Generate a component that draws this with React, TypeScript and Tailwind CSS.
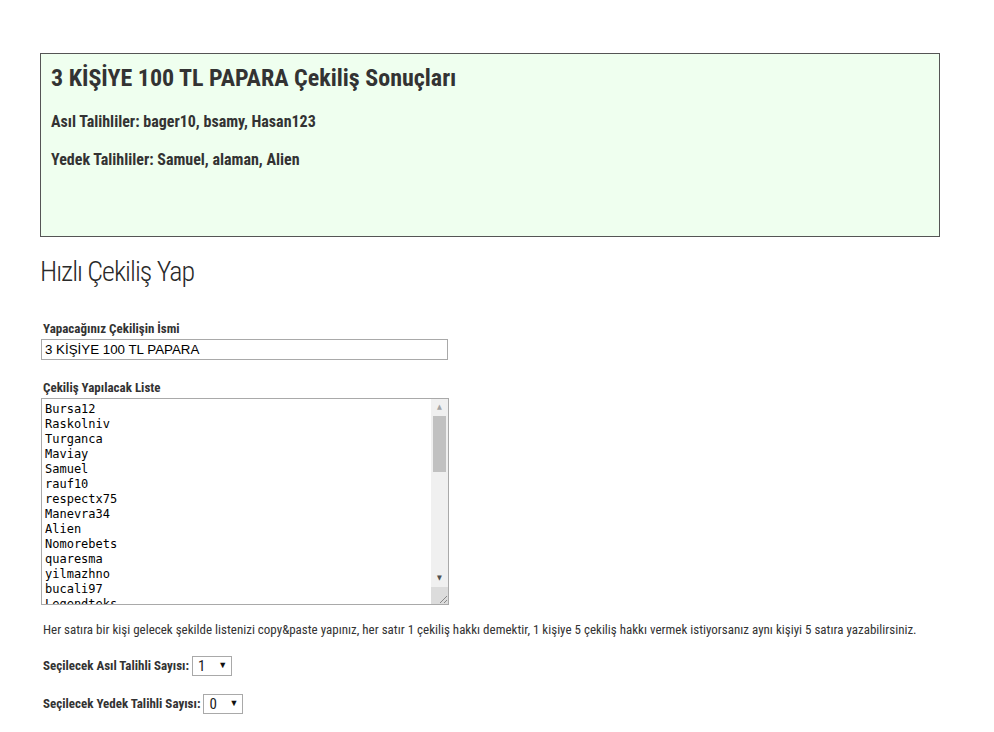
import React from "react";

const names = [
  "Bursa12",
  "Raskolniv",
  "Turganca",
  "Maviay",
  "Samuel",
  "rauf10",
  "respectx75",
  "Manevra34",
  "Alien",
  "Nomorebets",
  "quaresma",
  "yilmazhno",
  "bucali97",
  "Legendteks",
];

const cond = "font-['Roboto_Condensed','Liberation_Sans_Narrow','DejaVu_Sans_Condensed',sans-serif] [font-stretch:condensed]";

function FakeSelect({ value }: { value: string }) {
  return (
    <span className="inline-flex items-center h-[20px] w-[40px] border border-[#a9a9a9] bg-white pl-[5px] pr-[4px] justify-between align-middle">
      <span className={`text-[15px] font-normal text-[#222] ${cond}`}>{value}</span>
      <span className="text-[9px] text-[#111] font-['Liberation_Sans',sans-serif]">▼</span>
    </span>
  );
}

export default function App() {
  return (
    <div className={`min-h-[732px] bg-white text-[#333] ${cond}`}>
      <div className="pl-[40px] pt-[53px] w-[940px]">
        <div className="h-[184px] border border-[#555] bg-[#efffef] pl-[10px] pt-[10px]">
          <div className="text-[24px] font-bold leading-[28px]">3 KİŞİYE 100 TL PAPARA Çekiliş Sonuçları</div>
          <div className="mt-[20px] text-[16px] font-bold leading-[20px]">Asıl Talihliler: bager10, bsamy, Hasan123</div>
          <div className="mt-[18px] text-[16px] font-bold leading-[20px]">Yedek Talihliler: Samuel, alaman, Alien</div>
        </div>
        <div className="mt-[18px] text-[28px] font-light leading-[34px] tracking-[-1px] text-[#2a2a2a]">Hızlı Çekiliş Yap</div>
        <div className="pl-[1px] mt-[32px]">
          <div className="pl-[2px] text-[13px] font-bold leading-[15px]">Yapacağınız Çekilişin İsmi</div>
          <div className="mt-[3px] h-[21px] w-[407px] border border-[#a9a9a9] pl-[3px] text-[13.33px] leading-[19px] text-black font-['Liberation_Sans',sans-serif] [font-stretch:normal]">
            3 KİŞİYE 100 TL PAPARA
          </div>
          <div className="mt-[20px] pl-[2px] text-[13px] font-bold leading-[15px]">Çekiliş Yapılacak Liste</div>
          <div className="mt-[3px] h-[207px] w-[408px] border border-[#a9a9a9] flex">
            <div className="flex-1 overflow-hidden pl-[3px] pt-[3px] font-['DejaVu_Sans_Mono',monospace] [font-stretch:normal] text-[12px] leading-[15px] text-black">
              {names.map((n) => (
                <div key={n}>{n}</div>
              ))}
            </div>
            <div className="w-[17px] bg-[#f0f0f0] flex flex-col">
              <div className="h-[17px] flex items-center justify-center text-[7px] text-[#a3a3a3]">▲</div>
              <div className="h-[56px] mx-[2px] bg-[#c1c1c1]"></div>
              <div className="flex-1"></div>
              <div className="h-[17px] flex items-center justify-center text-[7px] text-[#505050]">▼</div>
              <div className="h-[17px] bg-[#dcdcdc] flex items-end justify-end">
                <svg width="10" height="10" viewBox="0 0 10 10">
                  <path d="M9 2 L2 9 M9 6 L6 9" stroke="#888" strokeWidth="1" />
                </svg>
              </div>
            </div>
          </div>
          <div className="mt-[17px] pl-[2px] text-[13px] leading-[16px]">
            Her satıra bir kişi gelecek şekilde listenizi copy&amp;paste yapınız, her satır 1 çekiliş hakkı demektir, 1 kişiye 5 çekiliş hakkı vermek istiyorsanız aynı kişiyi 5 satıra yazabilirsiniz.
          </div>
          <div className="mt-[18px] pl-[2px] flex items-center gap-[3px] text-[13px] font-bold">
            <span>Seçilecek Asıl Talihli Sayısı:</span>
            <FakeSelect value="1" />
          </div>
          <div className="mt-[18px] pl-[2px] flex items-center gap-[3px] text-[13px] font-bold">
            <span>Seçilecek Yedek Talihli Sayısı:</span>
            <FakeSelect value="0" />
          </div>
        </div>
      </div>
    </div>
  );
}
